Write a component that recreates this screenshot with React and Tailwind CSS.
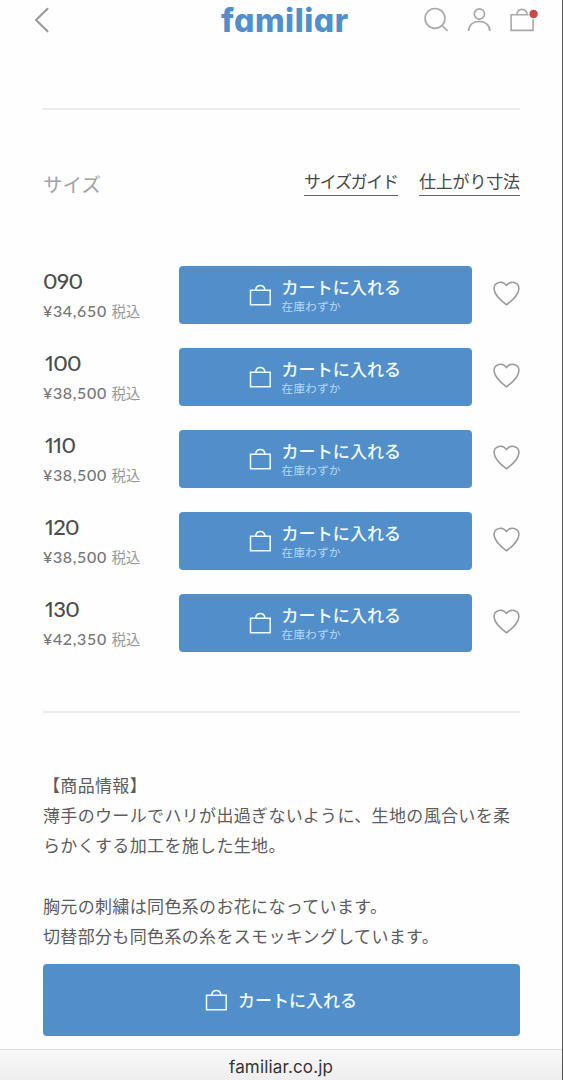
const sizes = [
  { size: '090', price: '¥34,650' },
  { size: '100', price: '¥38,500' },
  { size: '110', price: '¥38,500' },
  { size: '120', price: '¥38,500' },
  { size: '130', price: '¥42,350' },
];

function CartBag() {
  return (
    <svg className="h-[22px] w-[22px] shrink-0" viewBox="0 0 22 22" fill="none" stroke="#eefaff" strokeWidth="1.5">
      <path d="M1.5 6.3H21.2V20.7H1.5ZM6.6 6.2C7 3.2 8.7 1.4 11.3 1.4S15.6 3.2 16 6.2" />
    </svg>
  );
}

function Header() {
  return (
    <header className="flex h-10 items-center pl-[33px] pr-6">
      <svg className="h-7 w-[17px]" viewBox="0 0 17 28" fill="none" stroke="#999" strokeWidth="2.1" strokeLinecap="round">
        <path d="M14.5 2.8 3 14 14.5 25.3" />
      </svg>
      <h1 className="ml-[171px] mt-0.5 w-[130px] whitespace-nowrap font-['Inter'] text-[32px] font-extrabold leading-10 tracking-[0.5px] text-[#528fca] [font-feature-settings:'cv11']">
        familiar
      </h1>
      <div className="ml-auto flex h-10 w-[115px] justify-between">
        <svg className="h-10 w-[26px]" viewBox="0 0 26 40" fill="none" stroke="#a9a9a9" strokeWidth="1.7">
          <circle cx="12" cy="18.4" r="9.9" />
          <path d="m19 25.5 5.5 5.3" />
        </svg>
        <svg className="h-10 w-[26px]" viewBox="0 0 26 40" fill="none" stroke="#a9a9a9" strokeWidth="1.7">
          <circle cx="13.4" cy="14" r="5.1" />
          <path d="M2.6 31C2.9 25 7.1 21.3 13.2 21.3S23.6 25 23.9 31" />
        </svg>
        <svg className="h-10 w-[29px]" viewBox="0 0 29 40" fill="none" stroke="#a9a9a9" strokeWidth="1.6">
          <path d="M2.1 14.8H24.1V30.4H2.1ZM7.9 14.7C8.1 11.3 9.8 9.4 13 9.4S17.9 11.3 18.1 14.7" />
          <circle cx="24.6" cy="14" r="4.7" fill="#c9474d" stroke="white" strokeWidth="1" />
        </svg>
      </div>
    </header>
  );
}

function SizeRow({ size, price }) {
  return (
    <li className="flex h-[58px]">
      <div className="w-[136px] shrink-0 whitespace-nowrap">
        <div className={`${size === '090' ? 'pl-0' : 'pl-[2px]'} mt-[2px] h-[26px] font-['Lato'] text-[22px] font-medium leading-[26px] tracking-[-0.6px] text-[#4d4d4d] [font-feature-settings:'pnum']`}>{size}</div>
        <div className="mt-1.5 flex h-[22px] items-center text-[#777]">
          <span className="w-[68.5px] font-['Lato'] text-[16px] font-medium tracking-[0.65px]">{price}</span>
          <span className="text-[14.5px] text-[#999]">税込</span>
        </div>
      </div>
      <button className="flex w-[293px] items-start rounded-[4px] bg-[#528fca] pl-[70px]">
        <span className="mt-[18px]"><CartBag /></span>
        <span className="ml-[10.5px] mt-[9px] flex flex-col items-start whitespace-nowrap">
          <span className="text-[17px] font-medium leading-[24px] tracking-[0.1px] text-[#f3fcff]">カートに入れる</span>
          <span className="text-[11.5px] leading-[15px] tracking-[0.4px] text-[#b6d8f8]">在庫わずか</span>
        </span>
      </button>
      <svg className="ml-5 mt-[14px] h-7 w-7" viewBox="0 0 28 28" fill="none" stroke="#999" strokeWidth="1.5" strokeLinejoin="round">
        <path d="M14.5 5.7C12.7 2.9 9.8 1.8 7 2.4 3.8 3.1 1.9 5.7 2.1 9.1 2.5 14.8 9 20.7 14.5 24.8 20 20.7 26.5 14.8 26.9 9.1 27.1 5.7 25.2 3.1 22 2.4 19.2 1.8 16.3 2.9 14.5 5.7Z" />
      </svg>
    </li>
  );
}

export default function App() {
  return (
    <div className="flex h-[1080px] w-[563px] flex-col overflow-hidden border-r border-[#555] bg-[#fefefe] font-['Noto_Sans_CJK_JP',sans-serif]">
      <Header />
      <main className="flex flex-col pl-[43px] pr-[42px]">
        <hr className="mt-[68px] border-t-2 border-[#ececec]" />
        <div className="mt-[58px] flex h-[29px] items-start justify-between whitespace-nowrap">
          <h2 className="mt-[2px] text-[19.5px] leading-7 text-[#a2a2a2]">サイズ</h2>
          <nav className="flex gap-[21px] text-[17px] leading-[26px] text-[#484848]">
            <a className="w-[94px] border-b-[1.5px] border-[#666] pb-px tracking-[-1.3px]">サイズガイド</a>
            <a className="w-[101px] border-b-[1.5px] border-[#666] pb-px tracking-[-0.2px]">仕上がり寸法</a>
          </nav>
        </div>
        <ul className="mt-[68.5px] flex flex-col gap-[24.2px]">
          {sizes.map((item) => <SizeRow key={item.size} {...item} />)}
        </ul>
        <hr className="mt-[58.5px] border-t-2 border-[#ececec]" />
        <section className="mt-[57px] whitespace-nowrap text-[17px] leading-[30.2px] tracking-[0.34px] text-[#5c5c5c]">
          <p>【商品情報】</p>
          <p>薄手のウールでハリが出過ぎないように、生地の風合いを柔</p>
          <p>らかくする加工を施した生地。</p>
          <p className="mt-[30.2px]">胸元の刺繍は同色系のお花になっています。</p>
          <p>切替部分も同色系の糸をスモッキングしています。</p>
        </section>
        <button className="mt-[13px] flex h-[72px] items-center rounded-[4px] bg-[#528fca] pl-[162px]">
          <CartBag />
          <span className="ml-[11px] text-[17px] font-medium tracking-[0px] text-[#f3fcff]">カートに入れる</span>
        </button>
      </main>
      <footer className="mt-auto h-[31px] shrink-0 border-t border-[#dedede] bg-gradient-to-b from-[#f8f8f8] to-[#eeeeee] text-center font-['Inter'] text-[17px] leading-[34px] tracking-[0.15px] text-[#333]">
        familiar.co.jp
      </footer>
    </div>
  );
}
